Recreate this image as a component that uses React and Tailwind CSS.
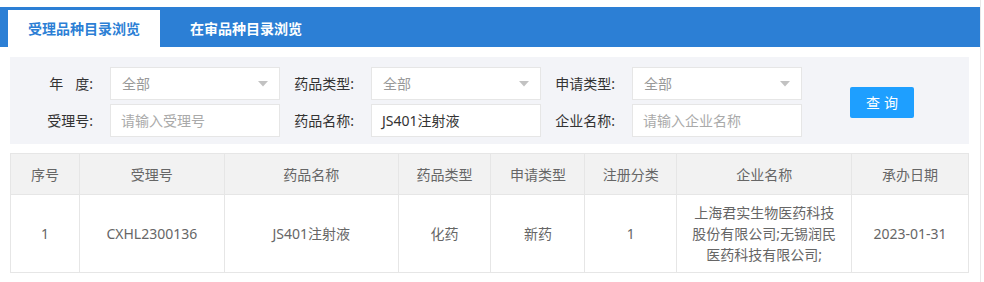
import React from "react";

const font = { fontFamily: '"Noto Sans", "Noto Sans CJK SC", sans-serif' };

function Arrow() {
  return (
    <svg width="10" height="6" viewBox="0 0 10 6" className="shrink-0">
      <path d="M0 0 L10 0 L5 5.5 Z" fill="#c2c2c2" />
    </svg>
  );
}

function SelectBox({ value }) {
  return (
    <div className="flex h-[33px] w-[170px] items-center justify-between border border-[#e6e6e6] bg-white pl-[11px] pr-[11px] text-[14px] text-[#999]">
      <span>{value}</span>
      <Arrow />
    </div>
  );
}

function InputBox({ value, placeholder }) {
  return (
    <div
      className={`flex h-[33px] w-[170px] items-center border border-[#e6e6e6] bg-white pl-[10px] text-[14px] ${
        value ? "text-[#333]" : "text-[#aaa]"
      }`}
    >
      {value || placeholder}
    </div>
  );
}

function Label({ children, first }) {
  return (
    <div
      className={`flex h-[33px] items-center justify-end pr-[17px] text-[14px] text-[#333] ${
        first ? "w-[100px]" : "w-[91px]"
      }`}
    >
      {children}
    </div>
  );
}

const cols = [70, 145, 174, 93, 94, 92, 175, 116];
const heads = ["序号", "受理号", "药品名称", "药品类型", "申请类型", "注册分类", "企业名称", "承办日期"];

export default function App() {
  return (
    <div style={font} className="w-[981px] border-r border-[#e8e8e8] bg-white min-h-[282px]">
      <div className="pt-[7px]">
        <div className="flex h-[40px] items-end bg-[#2c7fd5] pl-[8px]">
          <div className="flex h-[37px] items-center bg-white px-[20px] text-[14px] font-bold text-[#2c7fd5]">
            受理品种目录浏览
          </div>
          <div className="ml-[10px] flex h-[37px] items-center px-[20px] text-[14px] font-bold text-white">
            在审品种目录浏览
          </div>
        </div>
      </div>

      <div className="mx-[10px] mt-[10px] flex w-[959px] items-center bg-[#f3f4f8] pb-[7px] pt-[10px]">
        <div className="flex flex-col gap-[4px]">
          <div className="flex">
            <Label first>
              <span>年</span>
              <span className="inline-block w-[12px]" />
              <span>度:</span>
            </Label>
            <SelectBox value="全部" />
            <Label>药品类型:</Label>
            <SelectBox value="全部" />
            <Label>申请类型:</Label>
            <SelectBox value="全部" />
          </div>
          <div className="flex">
            <Label first>受理号:</Label>
            <InputBox placeholder="请输入受理号" />
            <Label>药品名称:</Label>
            <InputBox value="JS401注射液" />
            <Label>企业名称:</Label>
            <InputBox placeholder="请输入企业名称" />
          </div>
        </div>
        <div className="ml-[48px] flex h-[31px] w-[64px] items-center justify-center rounded-[2px] bg-[#1e9fff] text-[14px] tracking-[4px] text-white">
          <span className="pl-[4px]">查询</span>
        </div>
      </div>

      <div className="mx-[10px] mt-[9px] w-[959px] border border-[#e6e6e6] text-[14px] text-[#666]">
        <div className="flex h-[40px] bg-[#f2f2f2]">
          {heads.map((h, i) => (
            <div
              key={h}
              style={{ width: cols[i] - (i === 0 ? 1 : 0) }}
              className={`flex items-center justify-center ${i < cols.length - 1 ? "border-r border-[#e6e6e6]" : ""}`}
            >
              {h}
            </div>
          ))}
        </div>
        <div className="flex h-[78px] border-t border-[#e6e6e6]">
          {[
            "1",
            "CXHL2300136",
            "JS401注射液",
            "化药",
            "新药",
            "1",
            <span key="c" className="leading-[21px]">
              上海君实生物医药科技
              <br />
              股份有限公司;无锡润民
              <br />
              医药科技有限公司;
            </span>,
            "2023-01-31",
          ].map((c, i) => (
            <div
              key={i}
              style={{ width: cols[i] - (i === 0 ? 1 : 0) }}
              className={`flex items-center justify-center text-center ${i < cols.length - 1 ? "border-r border-[#e6e6e6]" : ""}`}
            >
              {c}
            </div>
          ))}
        </div>
      </div>
    </div>
  );
}
